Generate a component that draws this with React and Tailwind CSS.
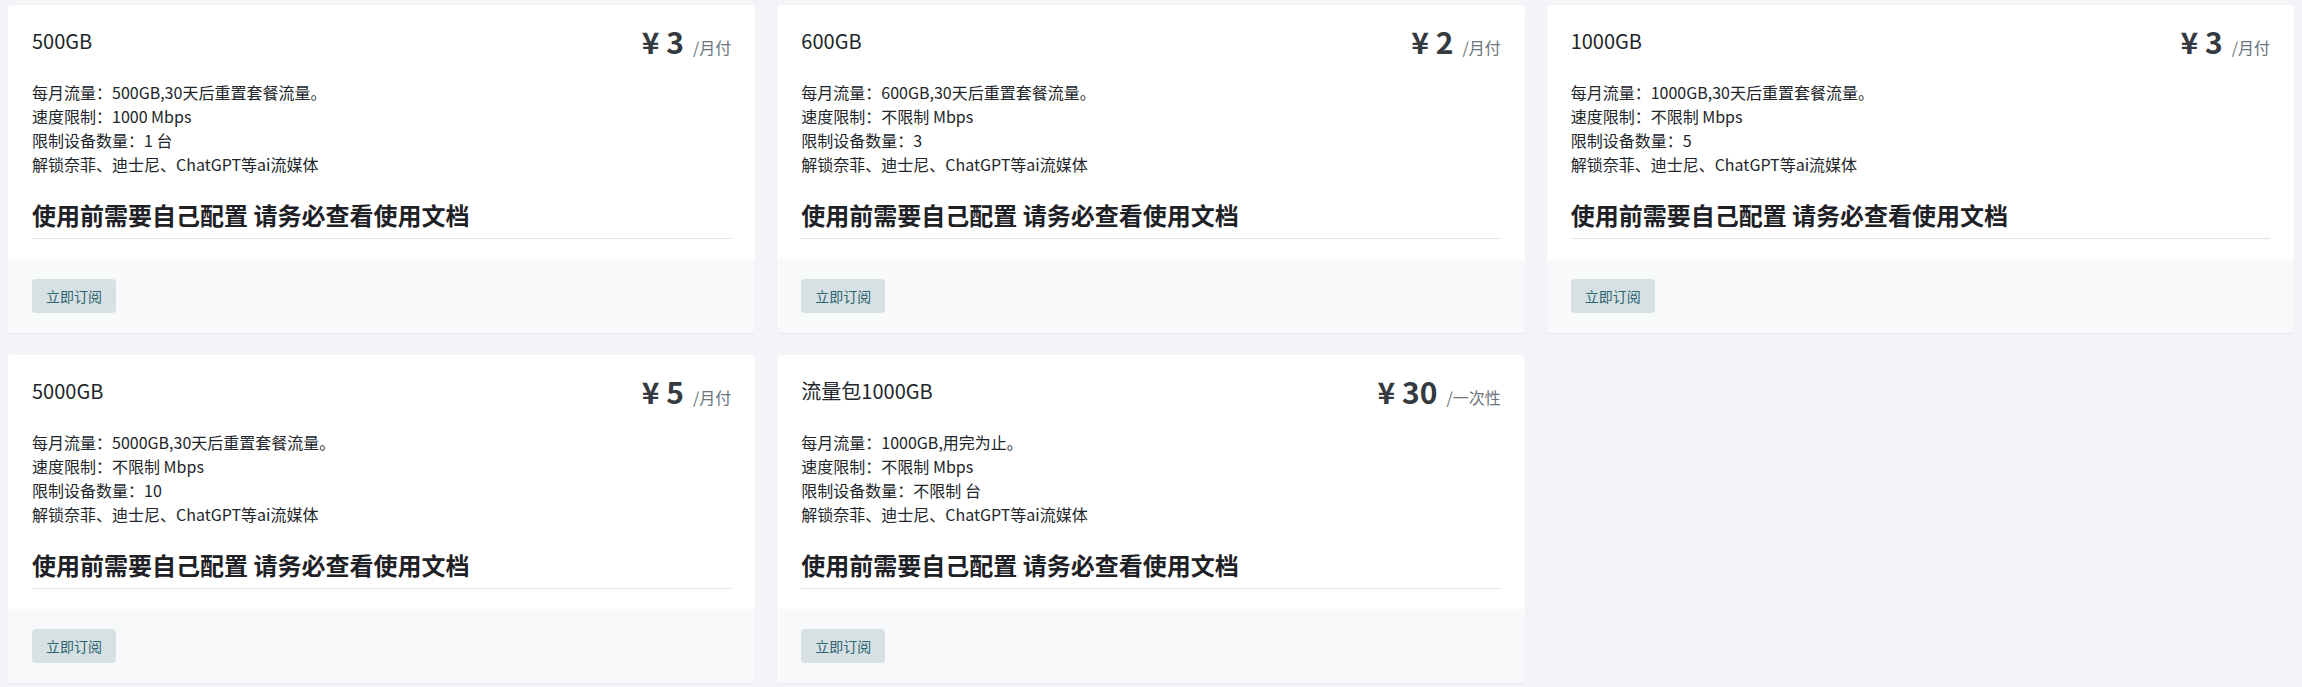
import React from 'react'

const plans = [
    {
        name: '500GB',
        price: '3',
        unit: '/月付',
        lines: ['每月流量：500GB,30天后重置套餐流量。', '速度限制：1000 Mbps', '限制设备数量：1 台', '解锁奈菲、迪士尼、ChatGPT等ai流媒体'],
    },
    {
        name: '600GB',
        price: '2',
        unit: '/月付',
        lines: ['每月流量：600GB,30天后重置套餐流量。', '速度限制：不限制 Mbps', '限制设备数量：3', '解锁奈菲、迪士尼、ChatGPT等ai流媒体'],
    },
    {
        name: '1000GB',
        price: '3',
        unit: '/月付',
        lines: ['每月流量：1000GB,30天后重置套餐流量。', '速度限制：不限制 Mbps', '限制设备数量：5', '解锁奈菲、迪士尼、ChatGPT等ai流媒体'],
    },
    {
        name: '5000GB',
        price: '5',
        unit: '/月付',
        lines: ['每月流量：5000GB,30天后重置套餐流量。', '速度限制：不限制 Mbps', '限制设备数量：10', '解锁奈菲、迪士尼、ChatGPT等ai流媒体'],
    },
    {
        name: '流量包1000GB',
        price: '30',
        unit: '/一次性',
        lines: ['每月流量：1000GB,用完为止。', '速度限制：不限制 Mbps', '限制设备数量：不限制 台', '解锁奈菲、迪士尼、ChatGPT等ai流媒体'],
    },
]

function PlanCard({ plan }) {
    return (
        <div className="bg-white rounded-[4px] overflow-hidden shadow-[0_1px_2px_rgba(0,0,0,0.06)]">
            <div className="px-[24px] pt-[21px] pb-[20px]">
                <div className="flex items-start justify-between">
                    <div className="text-[20px] leading-[30px] text-[#212529]">{plan.name}</div>
                    <div className="text-[30px] leading-[30px] font-bold text-[#343a40] whitespace-nowrap">
                        ¥ {plan.price}
                        <span className="ml-[9px] text-[16px] leading-none font-normal text-[#6c757d]">{plan.unit}</span>
                    </div>
                </div>
                <div className="mt-[24px] text-[16px] leading-[24px] text-[#212529]">
                    {plan.lines.map((l) => (
                        <div key={l}>{l}</div>
                    ))}
                </div>
                <div className="mt-[21px] pb-[5px] border-b border-[#dee2e6] text-[24px] leading-[36px] font-bold text-[#1e2125]">
                    使用前需要自己配置 请务必查看使用文档
                </div>
            </div>
            <div className="bg-[#f8f9fb] px-[24px] py-[20px]">
                <button className="h-[34px] px-[14px] rounded-[4px] bg-[#d7e0e3] text-[14px] text-[#2b6471]">立即订阅</button>
            </div>
        </div>
    )
}

export default function App() {
    return (
        <div
            className="min-h-[687px] bg-[#f3f4f8] px-[8px] pt-[5px] pb-[4px]"
            style={{ fontFamily: '"Noto Sans CJK SC", "Noto Sans", sans-serif' }}
        >
            <div className="grid grid-cols-3 gap-[22px]">
                {plans.map((p) => (
                    <PlanCard key={p.name} plan={p} />
                ))}
            </div>
        </div>
    )
}
